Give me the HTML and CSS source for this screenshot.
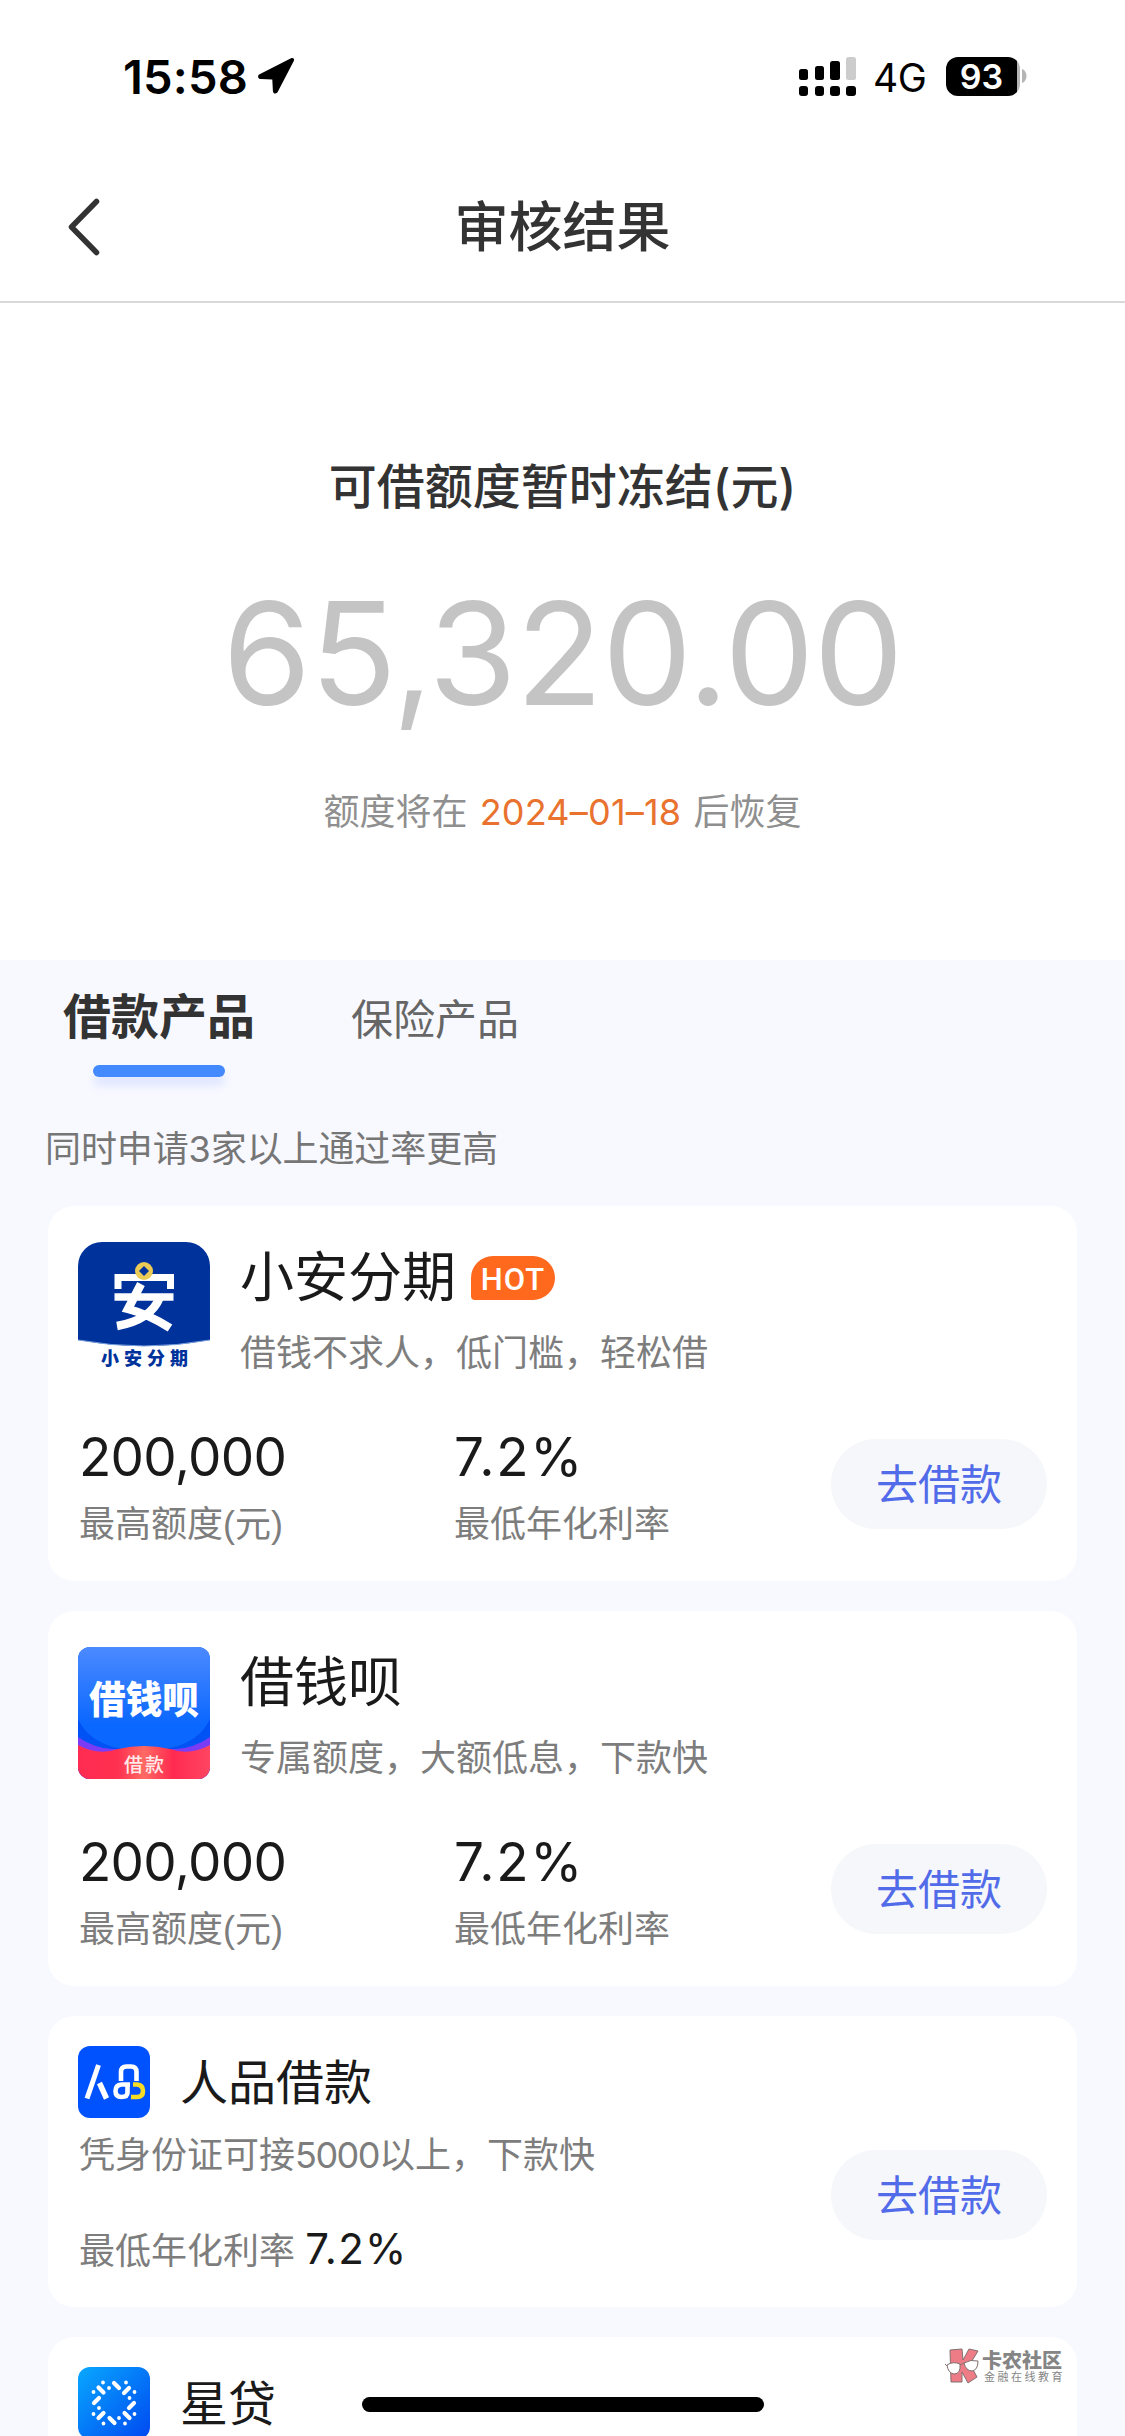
FILE: index.html
```html
<!DOCTYPE html>
<html lang="zh-CN">
<head>
<meta charset="utf-8">
<title>审核结果</title>
<link rel="stylesheet" href="styles.css">
</head>
<body>
<div class="screen">
  <header class="status-bar">
    <span class="clock">15:58</span>
    <svg class="location" width="38" height="38" viewBox="0 0 38 38"><path d="M34 1.200 2.600 17.200c-2.600 1.400-1.600 4.800 1.200 4.900l11.500.3 .6 11.500c.2 2.900 3.600 3.500 4.900.9L36.900 3.800c.9-2-1-3.600-2.900-2.600z"/></svg>
    <svg class="signal" width="58" height="42" viewBox="0 0 58 42">
      <rect x="0" y="14" width="9" height="11" rx="2.500"/><rect x="16" y="11" width="9" height="14" rx="2.500"/><rect x="31" y="6" width="10" height="19" rx="2.500"/><rect x="47" y="2" width="10" height="23" rx="2.500" fill="#ccc"/>
      <rect x="0" y="31" width="9" height="10" rx="3"/><rect x="16" y="31" width="9" height="10" rx="3"/><rect x="31" y="31" width="10" height="10" rx="3"/><rect x="47" y="31" width="10" height="10" rx="3"/>
    </svg>
    <span class="network">4G</span>
    <span class="battery"><span class="battery-level">93</span></span>
    <svg class="battery-tip" width="5" height="14" viewBox="0 0 5 14"><path d="M0 0c6 2 6 12 0 14z" fill="#b5b5b5"/></svg>
  </header>

  <nav class="nav">
    <svg class="back" width="34" height="58" viewBox="0 0 34 58"><path d="M29.500 3.500 4.500 29 29.500 54.500"/></svg>
    <h1 class="nav-title">审核结果</h1>
  </nav>

  <section class="quota">
    <h2 class="quota-title">可借额度暂时冻结(元)</h2>
    <div class="amount">65,320.00</div>
    <p class="restore">额度将在 <span class="date">2024–01–18</span> 后恢复</p>
  </section>

  <main class="products">
    <div class="tabs">
      <div class="tab tab-active">借款产品</div>
      <div class="tab">保险产品</div>
    </div>
    <p class="note">同时申请3家以上通过率更高</p>

    <div class="list">
      <article class="card card-large">
        <div class="head">
          <svg class="logo" width="132" height="132" viewBox="0 0 132 132">
            <path d="M0 24A24 24 0 0 1 24 0H108A24 24 0 0 1 132 24V98Q66 110 0 98Z" fill="#00329c"/>
            <path d="M0 98Q66 110 132 98" fill="none" stroke="#7aa0dc" stroke-width="1"/>
            <g fill="none" stroke="#fff" stroke-width="7">
              <path d="M40 47V35.500H92.500V47"/><path d="M36.500 55H95.500" stroke-width="7.500"/>
              <path d="M63 42 50 67Q70 72 92 86" stroke-width="8.500"/><path d="M82 55Q73 78 39 84" stroke-width="8.500"/>
            </g>
            <circle cx="66" cy="29" r="9" fill="#e9cb55"/><path d="M66 24l5 5-5 5-5-5z" fill="#00329c"/>
            <text x="23" y="123" class="logo-caption" textLength="87">小安分期</text>
          </svg>
          <div class="titles">
            <div class="name">小安分期<span class="hot">HOT</span></div>
            <div class="desc">借钱不求人，低门槛，轻松借</div>
          </div>
        </div>
        <div class="stats">
          <div class="stat"><div class="value">200,000</div><div class="label">最高额度(元)</div></div>
          <div class="stat"><div class="value value-rate">7.2%</div><div class="label">最低年化利率</div></div>
          <button class="apply">去借款</button>
        </div>
      </article>

      <article class="card card-large">
        <div class="head">
          <svg class="logo" width="132" height="132" viewBox="0 0 132 132">
            <defs>
              <linearGradient id="sky" x1="0" y1="0" x2="0" y2="1"><stop offset="0" stop-color="#4b8aff"/><stop offset=".75" stop-color="#0a67ff"/></linearGradient>
              <linearGradient id="wave" x1="0" y1="0" x2="1" y2="0"><stop offset="0" stop-color="#ff2c52"/><stop offset=".3" stop-color="#ff3050"/><stop offset=".5" stop-color="#ff6a63"/><stop offset=".72" stop-color="#ff2a50"/><stop offset="1" stop-color="#ff4562"/></linearGradient>
              <clipPath id="tile"><rect width="132" height="132" rx="12"/></clipPath>
            </defs>
            <g clip-path="url(#tile)">
              <rect width="132" height="132" fill="#0052f5"/>
              <path d="M0 0H132V72Q118 103 66 104 14 103 0 72Z" fill="url(#sky)"/>
              <path d="M0 90Q16 101 34 102H98Q116 101 132 90V132H0Z" fill="#7a3cf5"/>
              <path d="M0 98Q20 109 40 102 66 96 92 102 112 109 132 98V132H0Z" fill="url(#wave)"/>
            </g>
            <text x="11" y="66" class="logo-word" textLength="110" lengthAdjust="spacingAndGlyphs">借钱呗</text>
            <text x="46" y="125" class="logo-sub" textLength="40">借款</text>
          </svg>
          <div class="titles">
            <div class="name">借钱呗</div>
            <div class="desc">专属额度，大额低息，下款快</div>
          </div>
        </div>
        <div class="stats">
          <div class="stat"><div class="value">200,000</div><div class="label">最高额度(元)</div></div>
          <div class="stat"><div class="value value-rate">7.2%</div><div class="label">最低年化利率</div></div>
          <button class="apply">去借款</button>
        </div>
      </article>

      <article class="card card-small">
        <div class="info">
          <div class="brand">
            <svg class="icon" width="72" height="72" viewBox="0 0 72 72">
              <rect width="72" height="72" rx="12" fill="#0052ff"/>
              <g fill="none" stroke="#fff" stroke-width="4.600">
                <path d="M20.500 19 9 52.500" stroke-width="5"/><path d="M21.500 37 28.500 52.500" stroke-width="5.500"/>
                <path d="M43 35V26Q43 20.500 48.500 20.500H53Q58.500 20.500 58.500 26V35"/>
                <path d="M49.500 38V46.500Q49.500 51 43.500 51 37.500 51 37.500 45 37.500 39 43.500 38.500H52"/>
                <path d="M55 38.500H59Q65 39 65 45 65 51 59 51H53" stroke="#f7dc25"/>
              </g>
            </svg>
            <div class="brand-name">人品借款</div>
          </div>
          <div class="desc">凭身份证可接<span class="digits">5000</span>以上，下款快</div>
          <div class="rate">最低年化利率 <span class="rate-value">7.2%</span></div>
        </div>
        <button class="apply">去借款</button>
      </article>

      <article class="card card-small">
        <div class="info">
          <div class="brand">
            <svg class="icon" width="72" height="72" viewBox="0 0 72 72">
              <defs><linearGradient id="star" x1="0" y1="0" x2="1" y2="1"><stop offset="0" stop-color="#08a8ff"/><stop offset="1" stop-color="#0048f0"/></linearGradient></defs>
              <rect width="72" height="72" rx="12" fill="url(#star)"/>
              <g stroke="#fff" stroke-width="4.200" stroke-linecap="round">
                <path d="M20.500 20.500l5 5M36 16l5 5M46 26l5-5M16 36l5-5M51 41l5-5M20.500 51l5-5M31.500 51l5 5M46.500 46l5 5"/>
                <path d="M25 15.500h.01M31 21h.01M48 15.500h.01M15.500 25h.01M56.500 25h.01M51.500 31h.01M21 41h.01M15.500 47h.01M56.500 47h.01M41 51h.01M25.500 56.500h.01M47 56.500h.01" stroke-width="3.800"/>
              </g>
            </svg>
            <div class="brand-name">星贷</div>
          </div>
        </div>
      </article>
    </div>
  </main>

  <div class="home-indicator"></div>
  <div class="watermark">
    <svg width="34" height="36" viewBox="0 0 34 36">
      <g fill="#ee7c86" stroke="#82706f" stroke-width="1"><path d="M5 2 17 1 18 12 24 1 33 3 25 16 32 29 23 35 17 24 17 34 6 34Z"/></g>
      <g fill="#fff" stroke="#82706f" stroke-width="1"><path d="M2 17Q8 13 15 16 16 26 9 26 3 25 2 17Z"/><path d="M19 15Q26 11 33 13 33 22 27 23 21 23 19 15Z"/><path d="M15 17l4-2M2 18l-2-2" /></g>
    </svg>
    <div class="watermark-text"><div class="watermark-name">卡农社区</div><div class="watermark-sub">金融在线教育</div></div>
  </div>
</div>
</body>
</html>
```
FILE: styles.css
```css
* { box-sizing: border-box; margin: 0; padding: 0; }

body {
  width: 1125px;
  height: 2436px;
  overflow: hidden;
  background: #fff;
  font-family: Inter, "Noto Sans CJK SC", sans-serif;
  color: #1a1a1a;
}

svg { display: block; flex: none; }
.screen { position: relative; height: 2436px; overflow: hidden; }

/* Status bar */
.status-bar {
  display: flex;
  align-items: center;
  height: 150px;
  padding: 2px 98px 0 123px;
  color: #000;
}
.clock { width: 125px; font-size: 47px; font-weight: 600; letter-spacing: 0.2px; white-space: nowrap; }
.location { margin-left: 9px; }
.signal { margin: 0 16px 0 auto; }
.network { width: 57px; padding-top: 2px; font-size: 39px; letter-spacing: -0.5px; }
.battery {
  width: 74px;
  height: 39px;
  margin-left: 16px;
  border-radius: 12px;
  background: linear-gradient(90deg, #000 71px, #b5b5b5 71px);
}
.battery-level { display: block; width: 71px; text-align: center; font-size: 34px; line-height: 39px; font-weight: 600; color: #fff; }
.battery-tip { margin-left: 2px; }

/* Navigation */
.nav {
  display: flex;
  align-items: center;
  height: 153px;
  padding: 3px 67px 0;
  border-bottom: 2px solid #d9d9d9;
}
.back { fill: none; stroke: #333; stroke-width: 5.5; stroke-linecap: round; stroke-linejoin: round; }
.nav-title { flex: 1; margin-right: 34px; padding-top: 1px; text-align: center; font-size: 54px; line-height: 76px; font-weight: 500; color: #333; }

/* Quota */
.quota { height: 657px; padding-top: 150px; text-align: center; }
.quota-title { font-size: 48px; line-height: 68px; font-weight: 500; color: #333; }
.amount { margin-top: 52px; font-size: 143px; line-height: 160px; font-weight: 400; letter-spacing: -1px; color: #c4c4c4; }
.restore { margin-top: 54px; font-size: 36px; line-height: 50px; color: #8f8f8f; white-space: pre; }
.date { margin: 0 2px; color: #e8722e; letter-spacing: 0.2px; }

/* Product area */
.products { height: 1476px; padding: 28px 48px 0; background: #f8f9ff; }
.tabs { display: flex; gap: 96px; padding-left: 15px; }
.tab { font-size: 42px; line-height: 64px; color: #666; }
.tab-active { font-size: 48px; line-height: 58px; font-weight: 700; color: #333; }
.tab-active::after {
  content: "";
  display: block;
  width: 132px;
  height: 12px;
  margin: 19px auto 0;
  border-radius: 6px;
  background: #448aff;
  box-shadow: 0 9px 9px rgba(68, 110, 255, 0.13);
}
.note { margin: 47px 0 32px -3px; font-size: 36px; line-height: 50px; letter-spacing: -0.1px; color: #767676; }
.list { display: flex; flex-direction: column; gap: 30px; }

.card { flex: none; width: 1029px; padding: 36px 30px 0; border-radius: 26px; background: #fff; }
.card-large { height: 375px; }
.head { display: flex; gap: 30px; height: 137px; }
.titles { display: flex; flex-direction: column; gap: 19px; padding-top: 4px; }
.name { display: flex; align-items: center; font-size: 54px; line-height: 64px; }
.hot {
  width: 84px;
  height: 44px;
  margin-left: 15px;
  border-radius: 22px 22px 22px 4px;
  background: #ff691e;
  color: #fff;
  text-align: center;
  font: 500 31px/47px Roboto, sans-serif;
  letter-spacing: 1px;
}
.desc, .label {
  font-family: "Liberation Sans", "Noto Sans CJK SC", sans-serif;
  font-size: 36px;
  line-height: 50px;
  color: #7d7d7d;
  white-space: nowrap;
}
.digits { font-family: Inter, sans-serif; letter-spacing: -1.500px; }
.stats { display: flex; align-items: flex-start; padding: 48px 0 0 1px; }
.stat { width: 375px; }
.value { font-size: 53px; line-height: 60px; letter-spacing: -0.7px; }
.value-rate { letter-spacing: 1.800px; }
.label { margin-top: 13px; }
.apply {
  flex: none;
  width: 216px;
  height: 90px;
  padding-top: 1px;
  border: 0;
  border-radius: 45px;
  background: #f5f7fb;
  color: #526be9;
  font: 42px/89px Inter, "Noto Sans CJK SC", sans-serif;
}
.stats .apply { margin: 12px 0 0 2px; }

.card-small { display: flex; justify-content: space-between; height: 291px; padding-top: 30px; }
.card-small .apply { margin-top: 104px; }
.brand { display: flex; align-items: center; gap: 30px; }
.brand-name { padding-top: 1px; font-size: 48px; line-height: 60px; }
.card-small .desc { margin: 12px 0 43px 1px; }
.rate { margin-left: 1px; font-size: 36px; line-height: 50px; color: #7d7d7d; }
.rate-value { font-size: 42px; letter-spacing: 1.200px; color: #1a1a1a; }

/* Lettering inside the product logos */
.logo-caption { font: 900 18px "Noto Sans CJK SC", sans-serif; fill: #00329c; }
.logo-word { font: 900 38px "Noto Sans CJK SC", sans-serif; fill: #fff; }
.logo-sub { font: 500 19px "Noto Sans CJK SC", sans-serif; fill: #ffe9e9; }

/* Overlays */
.home-indicator { position: absolute; left: 362px; top: 2397px; width: 402px; height: 15px; border-radius: 8px; background: #000; }
.watermark { position: absolute; left: 945px; top: 2348px; display: flex; gap: 3px; color: #858585; }
.watermark-text { padding-top: 1px; white-space: nowrap; }
.watermark-name { font-size: 20px; line-height: 21px; font-weight: 900; font-family: "Noto Sans CJK SC", sans-serif; }
.watermark-sub { padding-left: 2px; font-size: 11px; line-height: 14px; letter-spacing: 2.500px; }
```
